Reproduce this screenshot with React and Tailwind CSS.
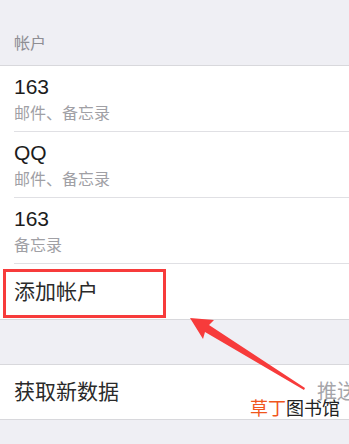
const font = { fontFamily: '"Liberation Sans", "Noto Sans CJK SC", sans-serif' };

const accounts = [
  { name: '163', detail: '邮件、备忘录' },
  { name: 'QQ', detail: '邮件、备忘录' },
  { name: '163', detail: '备忘录' },
];

export default function App() {
  return (
    <div className="relative w-[349px] h-[444px] overflow-hidden bg-[#efeff4]" style={font}>
      {/* Section header */}
      <div className="h-[65px] flex items-end px-[14px] pb-[9px] text-[16px] text-[#8e8e93]">帐户</div>

      <div className="bg-white border-t border-[#d8d8dc]">
        {accounts.map((a, i) => (
          <div key={i} className="pl-[14px]">
            <div className="h-[66px] flex flex-col pt-[8px] border-b border-[#e0e0e4]">
              <div className="text-[21px] leading-[26px] text-[#1c1c1c]">{a.name}</div>
              <div className="text-[16px] leading-[28px] text-[#a0a0a5]">{a.detail}</div>
            </div>
          </div>
        ))}

        {/* Add account row */}
        <div className="relative h-[55px] flex items-center px-[14px] text-[21px] text-[#2a2a2a]">
          添加帐户
          <div className="absolute left-[3px] top-[5px] w-[163px] h-[49px] border-[3px] border-[#f73b3b]" />
        </div>
      </div>

      <div className="h-[45px] border-t border-[#d8d8dc]" />

      {/* Fetch new data row */}
      <div className="h-[56px] bg-white border-y border-[#d8d8dc] flex items-center pl-[14px] overflow-hidden">
        <div className="flex-1 text-[21px] text-[#2a2a2a]">获取新数据</div>
        <div className="shrink-0 mr-[-8px] text-[20px] text-[#a5a5aa]">推送</div>
      </div>

      {/* Arrow annotation */}
      <svg className="absolute left-0 top-0" width="349" height="444" viewBox="0 0 349 444">
        <polygon
          points="190,318 214,320 209,325 305,388 304,390 205,332 203,339"
          fill="#f73b3b"
        />
      </svg>

      {/* Watermark */}
      <div className="absolute left-[250px] top-[398px] text-[18px] leading-[22px] whitespace-nowrap">
        <span className="text-[#f0561c]">草丁</span>
        <span className="text-[#222]">图书馆</span>
      </div>
    </div>
  );
}
